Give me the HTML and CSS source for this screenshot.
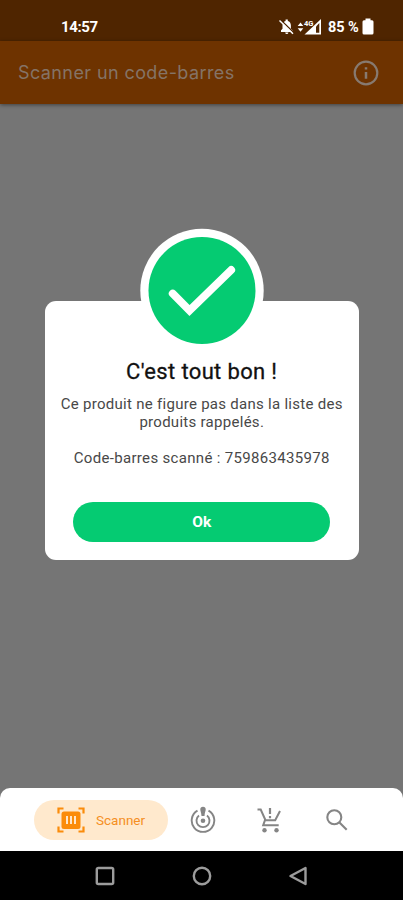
FILE: index.html
```html
<!DOCTYPE html>
<html lang="fr">
<head>
<meta charset="utf-8">
<title>Scanner un code-barres</title>
<link rel="stylesheet" href="styles.css">
</head>
<body>
<div class="phone">
  <div class="status">
    <span class="time">14:57</span>
    <span class="status-right">
      <svg class="signal" width="44" height="18" viewBox="0 0 44 18" fill="#fff">
        <path d="M2 14V12.300l1.500-1.500V7.500C3.500 5 4.800 3.400 6.600 2.900V1.500h2.200v1.400c1.900.5 3.100 2.100 3.100 4.600v3.300l1.600 1.500V14zM6.200 14.500h3.200a1.600 1.600 0 0 1-3.200 0z"/>
        <path d="M1.500 1.800l13.500 13.200" stroke="#4f2500" stroke-width="1.600"/>
        <path d="M.5 2.500l13.500 13.200" stroke="#fff" stroke-width="1.500"/>
        <path d="M18.700 8l2.800-3.500L24.300 8zM18.700 10.200l2.800 3.500 2.800-3.500z"/>
        <path d="M25.500 16.500L42 1v15.500z"/>
        <path d="M37 8.500L40.300 5v9.800H37z" fill="#4f2500"/>
        <text class="network" x="25" y="7.500">4G</text>
      </svg>
      <span class="percent">85 %</span>
      <svg class="battery" width="12" height="17" viewBox="0 0 12 17"><path d="M3.500 0.500h5v1.700H10a1.500 1.500 0 0 1 1.500 1.500V15a1.500 1.500 0 0 1-1.500 1.500H2A1.500 1.500 0 0 1 .5 15V3.700A1.500 1.500 0 0 1 2 2.200h1.500z" fill="#fff"/></svg>
    </span>
  </div>
  <header class="appbar">
    <h1>Scanner un code-barres</h1>
    <svg width="26" height="26" viewBox="0 0 26 26" fill="none" stroke="#877a70"><circle cx="13" cy="13" r="11.300" stroke-width="2.200"/><path d="M13 12v6.800M13 7.200v2.400" stroke-width="2.500"/></svg>
  </header>
  <main class="content">
    <section class="dialog">
      <svg class="badge" width="124" height="124" viewBox="0 0 124 124"><circle cx="62" cy="62.500" r="61.700" fill="#fff"/><circle cx="62" cy="62.500" r="53.500" fill="#05cb72"/><path d="M32.700 65.600L49.500 82.500 91.200 42" fill="none" stroke="#fff" stroke-width="7.800" stroke-linecap="round"/></svg>
      <h2>C'est tout bon !</h2>
      <p class="message">Ce produit ne figure pas dans la liste des<br>produits rappelés.</p>
      <p class="code">Code-barres scanné : 759863435978</p>
      <button class="ok">Ok</button>
    </section>
  </main>
  <div class="tabs-wrap">
    <nav class="tabs">
      <a class="tab active">
        <svg width="28" height="26" viewBox="0 0 28 26" fill="none" stroke="#fb8c0a" stroke-width="2.200"><path d="M1.500 6.500v-5h5M21.500 1.500h5v5M26.500 19.500v5h-5M6.500 24.500h-5v-5"/><rect x="4.500" y="4.500" width="19" height="17.500" rx="2.500" fill="#fb8c0a" stroke="none"/><path d="M10 9v8M14 9v8M18 9v8" stroke="#ffe7ca" stroke-width="2"/></svg>
        <span>Scanner</span>
      </a>
      <a class="tab target"><svg width="26" height="28" viewBox="0 0 26 28" fill="none" stroke="#858585" stroke-width="1.900"><path d="M7.500 4.700A11.300 11.300 0 1 0 18.500 4.700"/><path d="M9 9.500a6.500 6.500 0 1 0 8 0"/><circle cx="13" cy="14.700" r="2.300" fill="#858585" stroke="none"/><path d="M10.300 3.500a2.700 2.700 0 0 1 5.400 0c0 1.800-1 3-1.200 6.500h-3c-.2-3.500-1.200-4.700-1.200-6.500z" fill="#858585" stroke="none"/></svg></a>
      <a class="tab cart"><svg width="26" height="28" viewBox="0 0 26 28" fill="none" stroke="#858585" stroke-width="2"><path d="M1.500 2.500h3.200l4.800 10.700h9.700L24 4M9 13.200L7.200 18.200h15.500"/><path d="M14 1v6M14 9v2.200" stroke-width="2.200"/><circle cx="8.500" cy="23.300" r="2.200" fill="#858585" stroke="none"/><circle cx="20.500" cy="23.300" r="2.200" fill="#858585" stroke="none"/></svg></a>
      <a class="tab search"><svg width="22" height="22" viewBox="0 0 22 22" fill="none" stroke="#858585" stroke-width="2.100"><circle cx="8.300" cy="8.200" r="7"/><path d="M13.200 13.200l7.500 7.500"/></svg></a>
    </nav>
  </div>
  <div class="system">
    <svg width="20" height="20" viewBox="0 0 20 20"><rect x="1.800" y="2" width="16.400" height="16" rx="1.500"/></svg>
    <svg width="20" height="20" viewBox="0 0 20 20"><circle cx="10" cy="10" r="8.200"/></svg>
    <svg width="20" height="20" viewBox="0 0 20 20"><path d="M17.500 2v16L2.500 10z" stroke-linejoin="round"/></svg>
  </div>
</div>
</body>
</html>
```
FILE: styles.css
```css
* { box-sizing: border-box; margin: 0; padding: 0; }
body { font-family: Roboto, sans-serif; }
.phone { width: 403px; height: 900px; display: flex; flex-direction: column; background: #757575; overflow: hidden; }
.status { flex: none; height: 41px; padding: 12px 29px 0 61px; display: flex; justify-content: space-between; background: #4f2500; color: #fff; }
.time { font-size: 15px; line-height: 30px; font-weight: 700; letter-spacing: -0.4px; }
.status-right { display: flex; align-items: center; height: 29px; }
.signal { flex: none; }
.network { font: 700 7.5px Roboto, sans-serif; stroke: #4f2500; stroke-width: 0.8px; paint-order: stroke; }
.percent { margin-left: 5px; width: 34px; padding-top: 1px; font-size: 14.5px; font-weight: 700; white-space: nowrap; letter-spacing: -0.1px; }
.battery { margin-bottom: 1px; }
.appbar { flex: none; height: 63px; padding: 0 24px 0 18px; display: flex; align-items: center; justify-content: space-between; background: #6e3300; color: #857366; box-shadow: 0 1px 4px rgba(0, 0, 0, .45); z-index: 1; }
h1 { font: 400 18px Inter, sans-serif; letter-spacing: 0.4px; white-space: nowrap; }
.content { flex: 1; padding: 197px 44.500px 0 45px; }
.dialog { position: relative; height: 259px; padding: 58px 0 0; border-radius: 11px; background: #fff; text-align: center; }
.badge { position: absolute; left: 95px; top: -73px; }
h2 { font-size: 22px; line-height: 26px; font-weight: 400; -webkit-text-stroke: 0.3px #111; color: #111; letter-spacing: 0.35px; }
.message, .code { font-size: 15px; line-height: 18px; color: #484848; letter-spacing: 0.28px; white-space: nowrap; }
.message { margin-top: 10px; }
.code { margin-top: 18px; letter-spacing: 0.32px; }
.ok { display: block; width: 257px; height: 40px; margin: 35px auto 0; border: 0; border-radius: 20px; background: #05cb72; color: #fff; font: 700 15.5px Roboto, sans-serif; }
.tabs-wrap { flex: none; height: 63px; }
.tabs { height: 63px; padding: 12px 0 0 34px; display: flex; background: #fff; border-radius: 10px 10px 0 0; }
.tab { height: 40px; display: flex; align-items: center; }
.active { width: 134px; padding-left: 23px; gap: 11px; border-radius: 20px; background: #ffe9cd; color: #f58f23; font-size: 13.5px; }
.target { margin-left: 22px; }
.cart { margin-left: 40px; padding-top: 2px; }
.search { margin-left: 44px; }
.system { flex: none; height: 49px; padding: 0 95px 0 95px; display: flex; justify-content: space-between; align-items: center; background: #000; }
.system svg { fill: none; stroke: #9c9c9c; stroke-width: 2.400; }
```
